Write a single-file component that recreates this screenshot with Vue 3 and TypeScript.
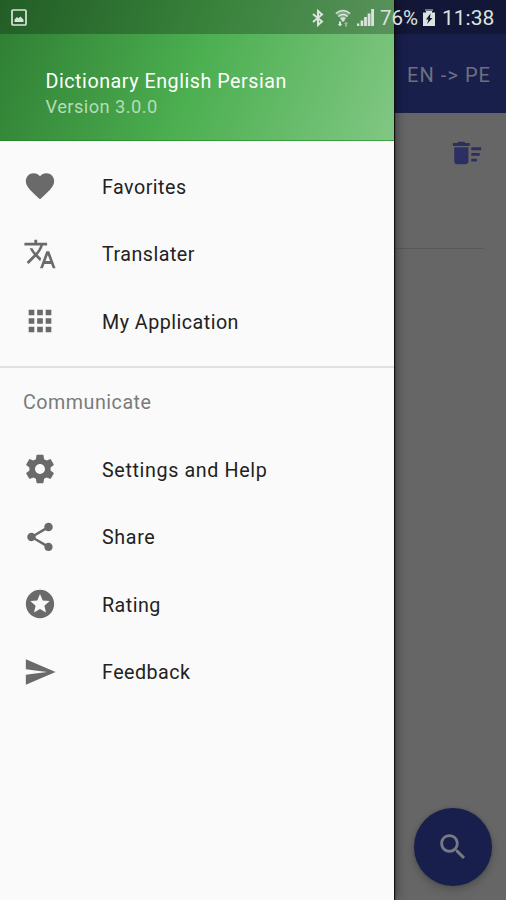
<script setup lang="ts">
interface MenuItem {
  label: string
  path: string
  wide?: boolean
}

const mainItems: MenuItem[] = [
  {
    label: 'Favorites',
    path: 'M12 21.35l-1.45-1.32C5.4 15.36 2 12.28 2 8.5 2 5.42 4.42 3 7.5 3c1.74 0 3.41.81 4.5 2.09C13.09 3.81 14.76 3 16.5 3 19.58 3 22 5.42 22 8.5c0 3.78-3.4 6.86-8.55 11.54L12 21.35z',
  },
  {
    label: 'Translater',
    path: 'M12.87 15.07l-2.54-2.51.03-.03c1.74-1.94 2.98-4.17 3.71-6.53H17V4h-7V2H8v2H1v1.99h11.17C11.5 7.92 10.44 9.75 9 11.35 8.07 10.32 7.3 9.19 6.69 8h-2c.73 1.63 1.73 3.17 2.98 4.56l-5.09 5.02L4 19l5-5 3.11 3.11.76-2.04zM18.5 10h-2L12 22h2l1.12-3h4.75L21 22h2l-4.5-12zm-2.62 7l1.62-4.33L19.12 17h-3.24z',
  },
  {
    label: 'My Application',
    path: 'M4 8h4V4H4v4zm6 12h4v-4h-4v4zm-6 0h4v-4H4v4zm0-6h4v-4H4v4zm6 0h4v-4h-4v4zm6-10v4h4V4h-4zm-6 4h4V4h-4v4zm6 6h4v-4h-4v4zm0 6h4v-4h-4v4z',
  },
]

const communicateItems: MenuItem[] = [
  {
    label: 'Settings and Help',
    wide: true,
    path: 'M19.43 12.98c.04-.32.07-.64.07-.98s-.03-.66-.07-.98l2.11-1.65c.19-.15.24-.42.12-.64l-2-3.46c-.12-.22-.39-.3-.61-.22l-2.49 1c-.52-.4-1.08-.73-1.69-.98l-.38-2.65C14.46 2.18 14.25 2 14 2h-4c-.25 0-.46.18-.49.42l-.38 2.65c-.61.25-1.17.59-1.69.98l-2.49-1c-.23-.09-.49 0-.61.22l-2 3.46c-.13.22-.07.49.12.64l2.11 1.65c-.04.32-.07.65-.07.98s.03.66.07.98l-2.11 1.65c-.19.15-.24.42-.12.64l2 3.46c.12.22.39.3.61.22l2.49-1c.52.4 1.08.73 1.69.98l.38 2.65c.03.24.24.42.49.42h4c.25 0 .46-.18.49-.42l.38-2.65c.61-.25 1.17-.59 1.69-.98l2.49 1c.23.09.49 0 .61-.22l2-3.46c.12-.22.07-.49-.12-.64l-2.11-1.65zM12 15.5c-1.93 0-3.5-1.57-3.5-3.5s1.57-3.5 3.5-3.5 3.5 1.57 3.5 3.5-1.57 3.5-3.5 3.5z',
  },
  {
    label: 'Share',
    wide: true,
    path: 'M18 16.08c-.76 0-1.44.3-1.96.77L8.91 12.7c.05-.23.09-.46.09-.7s-.04-.47-.09-.7l7.05-4.11c.54.5 1.25.81 2.04.81 1.66 0 3-1.34 3-3s-1.34-3-3-3-3 1.34-3 3c0 .24.04.47.09.7L8.04 9.81C7.5 9.31 6.79 9 6 9c-1.66 0-3 1.34-3 3s1.34 3 3 3c.79 0 1.5-.31 2.04-.81l7.12 4.16c-.05.21-.08.43-.08.65 0 1.61 1.31 2.92 2.92 2.92s2.92-1.31 2.92-2.92-1.31-2.92-2.92-2.92z',
  },
  {
    label: 'Rating',
    path: 'M11.99 2C6.47 2 2 6.48 2 12s4.47 10 9.99 10C17.52 22 22 17.52 22 12S17.52 2 11.99 2zm4.24 16L12 15.45 7.77 18l1.12-4.81-3.73-3.23 4.92-.42L12 5l1.92 4.53 4.92.42-3.73 3.23L16.23 18z',
  },
  {
    label: 'Feedback',
    path: 'M2.01 21L23 12 2.01 3 2 10l15 2-15 2z',
  },
]

const groups = [
  { title: '', items: mainItems },
  { title: 'Communicate', items: communicateItems },
]
</script>

<template>
  <div class="screen">
    <main class="page">
      <header class="toolbar"><span class="lang">EN -&gt; PE</span></header>
      <section class="history">
        <svg class="sweep" viewBox="0 0 24 24">
          <path d="M15 16h4v2h-4zm0-8h7v2h-7zm0 4h6v2h-6zM3 18c0 1.1.9 2 2 2h6c1.1 0 2-.9 2-2V8H3v10zM14 5h-3l-1-1H6L5 5H2v2h12z" />
        </svg>
      </section>
      <button class="fab" aria-label="Search">
        <svg viewBox="0 0 24 24">
          <path d="M15.5 14h-.79l-.28-.27C15.41 12.59 16 11.11 16 9.5 16 5.91 13.09 3 9.5 3S3 5.91 3 9.5 5.91 16 9.5 16c1.61 0 3.09-.59 4.23-1.57l.27.28v.79l5 4.99L20.49 19l-4.99-5zm-6 0C7.01 14 5 11.99 5 9.5S7.01 5 9.5 5 14 7.01 14 9.5 11.99 14 9.5 14z" />
        </svg>
      </button>
    </main>

    <aside class="drawer">
      <header class="drawer-head">
        <span class="app-name">Dictionary English Persian</span>
        <span class="version">Version 3.0.0</span>
      </header>
      <nav v-for="group in groups" :key="group.title" class="group">
        <h2 v-if="group.title" class="group-title">{{ group.title }}</h2>
        <a v-for="item in group.items" :key="item.label" class="item">
          <svg class="item-icon" viewBox="0 0 24 24"><path :d="item.path" /></svg>
          <span class="item-label" :class="{ wide: item.wide }">{{ item.label }}</span>
        </a>
      </nav>
    </aside>

    <div class="status">
      <svg class="picture" viewBox="0 0 16 17">
        <rect x="1" y="1" width="14" height="15" rx="1" fill="none" stroke="currentColor" stroke-width="1.7" />
        <path d="M3.5 13V10.5L6 8l1.5 1.2L9.5 7.5l3 3.2V13z" fill="currentColor" />
      </svg>
      <svg class="bluetooth" viewBox="0 0 12 18">
        <path d="M1 5l9 7.5-4 3.5V2l4 3.500L1 13" fill="none" stroke="currentColor" stroke-width="2" />
      </svg>
      <svg class="wifi" viewBox="0 0 16 18">
        <path d="M.8 4.500q7.200-6 14.400 0L8 12z" fill="currentColor" opacity=".35" />
        <path d="M.8 4.500q7.200-6 14.400 0M3.300 7.500q4.700-4 9.400 0M5.600 10q2.400-2 4.800 0" fill="none" stroke="currentColor" stroke-width="1.500" />
        <path d="M8 9l2 2-2 2-2-2zM4 12.500h2V15h1.200L5 17.600 2.800 15H4z" fill="currentColor" />
        <path d="M10 17.500V15H8.800L11 12.400l2.200 2.600H12v2.500z" fill="currentColor" opacity=".5" />
      </svg>
      <svg class="signal" viewBox="0 0 17 17">
        <path d="M0 14.500h2.300V17H0zM3.600 11.500h2.700V17H3.600zM7.100 8h2.800v9H7.100zM10.700 4.500h2.800V17h-2.800zM14.200 0H17v17h-2.800z" fill="currentColor" />
      </svg>
      <span class="percent">76%</span>
      <svg class="battery" viewBox="0 0 12 17">
        <path fill-rule="evenodd" d="M3 2h6v1.500h3V17H0V3.500h3zM7.500 4.500L3 10.500h2.500L4 15l5.500-6H7z" fill="currentColor" />
        <path d="M2 0h8v2H2z" fill="currentColor" opacity=".45" />
      </svg>
      <span class="clock">11:38</span>
    </div>
  </div>
</template>

<style>
body {
  margin: 0;
}
</style>

<style scoped>
.screen {
  position: relative;
  width: 506px;
  height: 900px;
  overflow: hidden;
  font-family: Roboto, 'Liberation Sans', sans-serif;
}
.page {
  height: 900px;
  background: #666;
}
.toolbar {
  box-sizing: border-box;
  height: 113px;
  padding: 34px 15px 0 0;
  display: flex;
  align-items: center;
  justify-content: flex-end;
  background: #191f4b;
}
.lang {
  font-size: 20px;
  letter-spacing: 1.05px;
  padding-top: 3px;
  color: #6d7080;
}
.history {
  box-sizing: border-box;
  height: 136px;
  margin-right: 22px;
  padding-top: 23px;
  display: flex;
  justify-content: flex-end;
  align-items: flex-start;
  border-bottom: 1px solid #585858;
}
.sweep {
  width: 34px;
  height: 34px;
  fill: #2c2f61;
}
.fab {
  position: absolute;
  left: 414px;
  top: 808px;
  width: 78px;
  height: 78px;
  padding: 0;
  display: flex;
  align-items: center;
  justify-content: center;
  border: 0;
  border-radius: 50%;
  background: #191f4d;
  box-shadow: 0 4px 8px rgba(0, 0, 0, 0.2), 0 0 3px rgba(0, 0, 0, 0.2);
}
.fab svg {
  width: 34px;
  height: 34px;
  fill: #777a84;
}
.drawer {
  position: absolute;
  left: 0;
  top: 0;
  width: 394px;
  height: 900px;
  background: #fafafa;
  box-shadow: 1px 0 1px #111, 2px 0 10px rgba(0, 0, 0, 0.45);
}
.drawer-head {
  box-sizing: border-box;
  height: 141px;
  padding: 69px 0 0 45.5px;
  display: flex;
  flex-direction: column;
  background: linear-gradient(110deg, #2e7d32 0%, #4caf50 50%, #81c784 100%);
  border-bottom: 1px solid rgba(30, 140, 35, 0.6);
}
.app-name {
  font-size: 19.7px;
  line-height: 25px;
  letter-spacing: 0.53px;
  color: #fff;
}
.version {
  font-size: 18.3px;
  line-height: 25px;
  letter-spacing: 0.43px;
  color: #b5dcb6;
}
.group {
  padding: 11.5px 0 11px;
}
.group + .group {
  padding-top: 0;
  border-top: 2px solid #e0e0e0;
}
.group-title {
  margin: 0;
  padding-left: 23px;
  font-size: 19.7px;
  font-weight: 400;
  line-height: 70px;
  height: 67.5px;
  letter-spacing: 0.5px;
  color: #7b7b7b;
}
.item {
  display: flex;
  align-items: center;
  height: 67.5px;
  padding-left: 22.5px;
  gap: 45.5px;
}
.item-icon {
  width: 34px;
  height: 34px;
  fill: #6a6a6a;
}
.item-label {
  padding-top: 2px;
  font-size: 19.7px;
  letter-spacing: 0.48px;
  color: #222;
}
.item-label.wide {
  letter-spacing: 0.63px;
}
.status {
  position: absolute;
  left: 0;
  top: 0;
  box-sizing: border-box;
  width: 506px;
  height: 34px;
  padding: 1px 0 0 11px;
  display: flex;
  align-items: center;
  background: rgba(0, 0, 0, 0.25);
  color: #dce3de;
}
.picture {
  width: 16px;
  height: 17px;
}
.bluetooth {
  width: 12px;
  height: 18px;
  margin-left: 285px;
}
.wifi {
  width: 16px;
  height: 18px;
  margin-left: 11px;
}
.signal {
  width: 17px;
  height: 17px;
  margin-left: 6px;
}
.percent {
  width: 39px;
  margin-left: 6px;
  font-size: 20.5px;
}
.battery {
  width: 12px;
  height: 17px;
  margin-left: 4px;
}
.clock {
  margin-left: 7px;
  font-size: 21px;
}
</style>
